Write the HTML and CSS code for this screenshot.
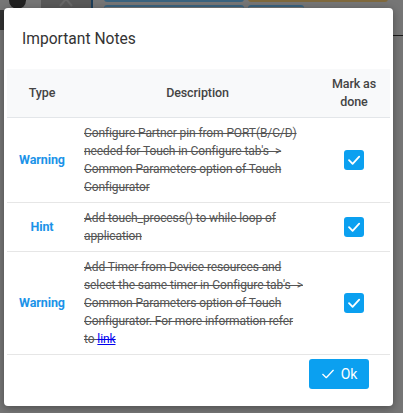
FILE: index.html
```html
<!DOCTYPE html>
<html>
<head>
<meta charset="utf-8">
<link rel="stylesheet" href="styles.css">
</head>
<body>
<div class="app">
  <div class="bg-dot"></div>
  <div class="bg-close"><svg viewBox="0 0 50 18" width="50" height="18"><path d="M19 2 L31 16 M31 2 L19 16" stroke="#d0d0d0" stroke-width="2"/></svg></div>
  <div class="bg-bar bg-bar-a"></div>
  <div class="bg-bar bg-bar-b"></div>
  <div class="bg-bar bg-bar-c"></div>
  <div class="bg-bar bg-bar-d"></div>
  <div class="bg-side"></div>
  <div class="bg-line"></div>
</div>
<div class="overlay"></div>
<div class="modal">
  <div class="modal-header">
    <h5 class="modal-title">Important Notes</h5>
  </div>
  <div class="modal-body">
    <table class="notes">
      <thead>
        <tr>
          <th class="col-type">Type</th>
          <th class="col-desc">Description</th>
          <th class="col-done">Mark as<br>done</th>
        </tr>
      </thead>
      <tbody>
        <tr>
          <td class="type">Warning</td>
          <td class="desc">Configure Partner pin from PORT(B/C/D) needed for Touch in Configure tab's -&gt; Common Parameters option of Touch Configurator</td>
          <td class="done"><span class="check"><svg viewBox="0 0 20 20" width="20" height="20"><path d="M5 10.2 L8.6 13.8 L15.2 6.6" fill="none" stroke="#fff" stroke-width="1.8" stroke-linecap="round" stroke-linejoin="round"/></svg></span></td>
        </tr>
        <tr>
          <td class="type">Hint</td>
          <td class="desc">Add touch_process() to while loop of application</td>
          <td class="done"><span class="check"><svg viewBox="0 0 20 20" width="20" height="20"><path d="M5 10.2 L8.6 13.8 L15.2 6.6" fill="none" stroke="#fff" stroke-width="1.8" stroke-linecap="round" stroke-linejoin="round"/></svg></span></td>
        </tr>
        <tr>
          <td class="type">Warning</td>
          <td class="desc">Add Timer from Device resources and select the same timer in Configure tab's -&gt; Common Parameters option of Touch Configurator. For more information refer to&nbsp;<a href="#" class="link">link</a></td>
          <td class="done"><span class="check"><svg viewBox="0 0 20 20" width="20" height="20"><path d="M5 10.2 L8.6 13.8 L15.2 6.6" fill="none" stroke="#fff" stroke-width="1.8" stroke-linecap="round" stroke-linejoin="round"/></svg></span></td>
        </tr>
      </tbody>
    </table>
  </div>
  <div class="modal-footer">
    <button class="ok-btn"><svg viewBox="0 0 16 16" width="14" height="14"><path d="M2 8.4 L6 12.2 L14 3.8" fill="none" stroke="#fff" stroke-width="1.5" stroke-linecap="round" stroke-linejoin="round"/></svg><span>Ok</span></button>
  </div>
</div>
</body>
</html>
```
FILE: styles.css
```css
html, body {
  margin: 0;
  padding: 0;
  width: 403px;
  height: 413px;
  overflow: hidden;
  font-family: Roboto, "Open Sans", sans-serif;
  background: #ededed;
}
.app {
  position: absolute;
  inset: 0;
}
.bg-dot { position: absolute; left: 9px; top: -8px; width: 17px; height: 17px; border-radius: 50%; background: #444; }
.bg-close { position: absolute; left: 41px; top: -10px; width: 50px; height: 18px; background: #b3b3b3; border-right: 2px solid #3a7bb0; }
.bg-close svg { display: block; }
.bg-bar { position: absolute; height: 8px; border-radius: 3px; box-sizing: border-box; }
.bg-bar-a { left: 104px; top: -6px; width: 140px; border: 2px solid #75c6ff; background: #fff; }
.bg-bar-b { left: 248px; top: -6px; width: 140px; border: 2px solid #ffd27a; background: #fff; }
.bg-bar-c { left: 104px; top: 5px; width: 140px; border-top: 2px solid #75c6ff; }
.bg-bar-d { left: 248px; top: 5px; width: 56px; border-top: 2px solid #75c6ff; }
.bg-side { position: absolute; left: 0; top: 10px; width: 4px; height: 20px; background: #666; }
.bg-line { position: absolute; right: 0; top: 35px; width: 12px; height: 1px; background: #333; }
.overlay {
  position: absolute;
  inset: 0;
  background: rgba(0, 0, 0, 0.5);
}
.modal {
  position: absolute;
  left: 4px;
  top: 8px;
  width: 389px;
  height: 398px;
  background: #fff;
  border-radius: 4px;
  box-shadow: 0 2px 8px rgba(0, 0, 0, 0.35);
  display: flex;
  flex-direction: column;
}
.modal-header {
  padding: 20px 18px 19px;
}
.modal-title {
  margin: 0;
  font-size: 15.6px;
  font-weight: 400;
  line-height: 22px;
  color: #333;
}
.modal-body {
  padding: 0 3px;
}
.notes {
  width: 383px;
  table-layout: fixed;
  border-collapse: collapse;
  font-size: 12px;
  letter-spacing: -0.1px;
  line-height: 18px;
  color: #444;
}
.notes th {
  background: #f8f9fa;
  font-weight: 500;
  font-size: 12.5px;
  color: #444;
  padding: 6px 0;
  border-bottom: 1px solid #e3e6e9;
  text-align: center;
  vertical-align: middle;
}
.col-type { width: 70px; }
.col-desc { width: 241px; }
.col-done { width: 72px; }
.notes td {
  padding: 6px 0;
  border-bottom: 1px solid #e6e6e6;
  vertical-align: middle;
}
.type {
  text-align: center;
  font-weight: 700;
  font-size: 12.5px;
  color: #1b93e8;
}
.notes .desc {
  padding-left: 7px;
  padding-right: 7px;
  text-decoration: line-through;
  color: #555;
}
.link { color: #0000ee; text-decoration: underline line-through; }
.done { text-align: center; }
.check {
  display: inline-block;
  width: 20px;
  height: 20px;
  border-radius: 3px;
  background: #0ba0f0;
  vertical-align: middle;
}
.check svg { display: block; }
.modal-footer {
  display: flex;
  justify-content: flex-end;
  padding: 4px 24px 0;
}
.ok-btn {
  display: flex;
  align-items: center;
  gap: 6px;
  height: 30px;
  width: 60px;
  justify-content: center;
  border: none;
  border-radius: 3px;
  background: #0ba0f0;
  color: #fff;
  font-family: inherit;
  font-size: 14px;
  padding: 0;
}
.ok-btn svg { display: block; }
```
